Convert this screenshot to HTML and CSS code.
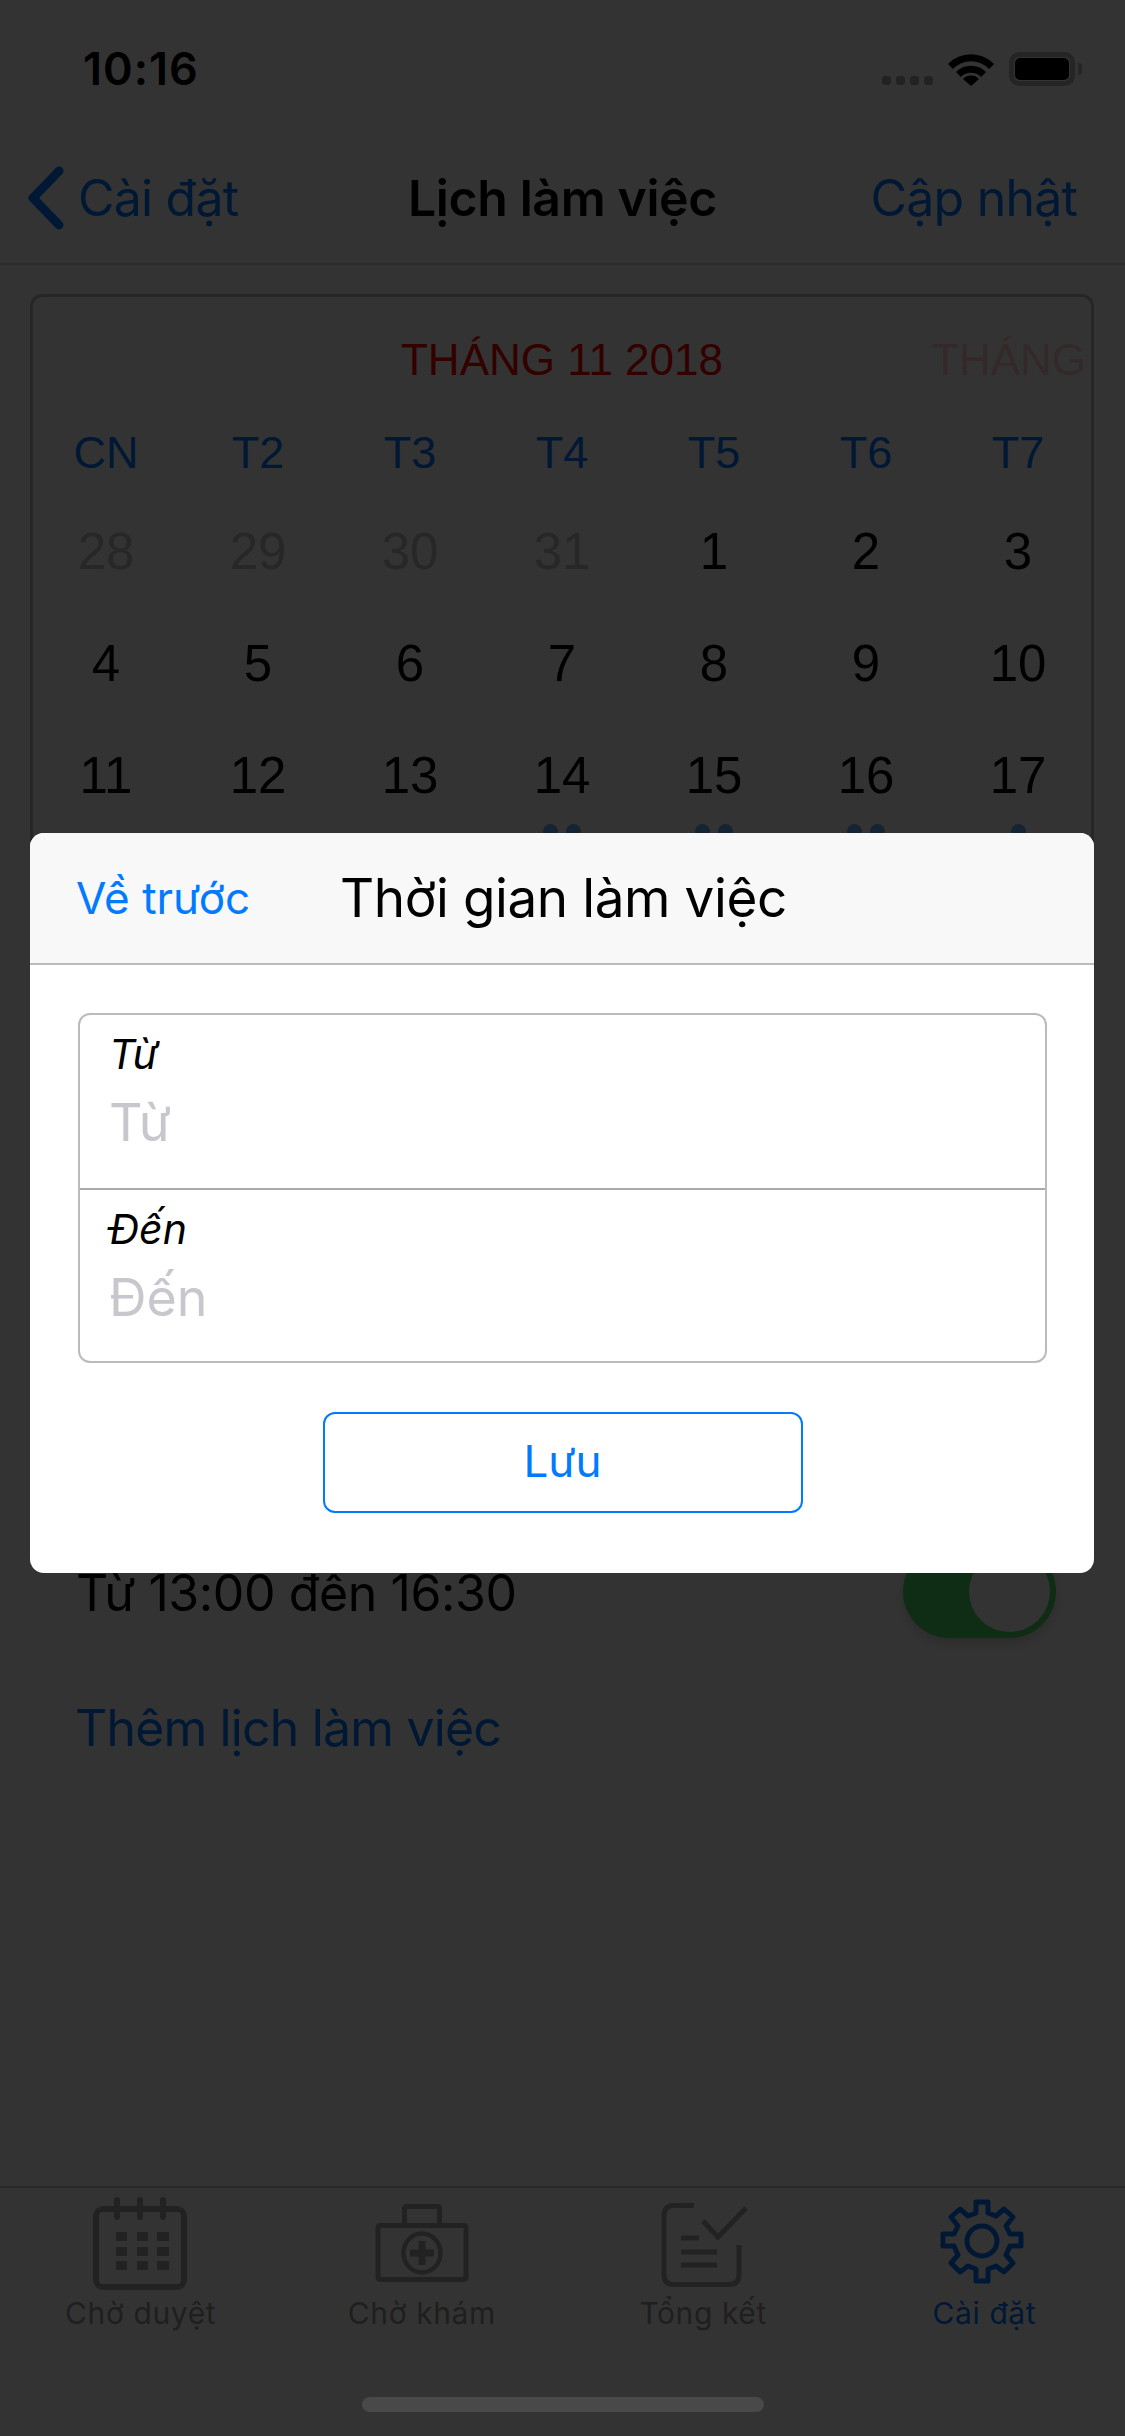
FILE: index.html
```html
<!DOCTYPE html>
<html lang="vi">
<head>
    <meta charset="UTF-8">
    <meta name="viewport" content="width=device-width, initial-scale=1.0">
    <title>Lịch làm việc</title>
    <link rel="stylesheet" href="styles.css">
</head>
<body>
    <div class="screen">
        <div class="statusBar">
            <span class="time">10:16</span>
            <div class="statusIcons">
                <div class="signal"><i></i><i></i><i></i><i></i></div>
                <svg class="wifi" width="46" height="34" viewBox="0 0 46 34">
                    <path d="M0 12 A32 32 0 0 1 46 12 L41 17 A25 25 0 0 0 5 17 Z" fill="#000"/>
                    <path d="M8 20 A21 21 0 0 1 38 20 L33 25 A14 14 0 0 0 13 25 Z" fill="#000"/>
                    <path d="M15 27 A11 11 0 0 1 31 27 L23 34 Z" fill="#000"/>
                </svg>
                <div class="battery"><div class="batteryFill"></div></div>
                <div class="batteryNub"></div>
            </div>
        </div>

        <div class="navBar">
            <div class="navBack">
                <svg width="37" height="64" viewBox="0 0 37 64">
                    <path d="M32 5 L6 32 L32 59" fill="none" stroke="#007aff" stroke-width="9" stroke-linecap="round" stroke-linejoin="round"/>
                </svg>
                <span>Cài đặt</span>
            </div>
            <div class="navTitle">Lịch làm việc</div>
            <div class="navAction">Cập nhật</div>
        </div>

        <div class="calendar">
            <div class="monthRow">
                <span class="monthTitle">THÁNG 11 2018</span>
                <span class="monthNext">THÁNG</span>
            </div>
            <div class="weekdays">
                <span>CN</span><span>T2</span><span>T3</span><span>T4</span><span>T5</span><span>T6</span><span>T7</span>
            </div>
            <div class="dates">
                <div class="date muted">28</div>
                <div class="date muted">29</div>
                <div class="date muted">30</div>
                <div class="date muted">31</div>
                <div class="date">1</div>
                <div class="date">2</div>
                <div class="date">3</div>
                <div class="date">4</div>
                <div class="date">5</div>
                <div class="date">6</div>
                <div class="date">7</div>
                <div class="date">8</div>
                <div class="date">9</div>
                <div class="date">10</div>
                <div class="date">11</div>
                <div class="date">12</div>
                <div class="date">13</div>
                <div class="date">14<div class="dots"><i></i><i></i></div></div>
                <div class="date">15<div class="dots"><i></i><i></i></div></div>
                <div class="date">16<div class="dots"><i></i><i></i></div></div>
                <div class="date">17<div class="dots"><i></i></div></div>
            </div>
        </div>

        <div class="scheduleRow">
            <span>Từ 13:00 đến 16:30</span>
            <div class="toggle"><div class="knob"></div></div>
        </div>
        <div class="addRow">Thêm lịch làm việc</div>

        <div class="tabBar">
            <div class="tab">
                <svg width="94" height="94" viewBox="1 0 94 94">
                    <rect x="3" y="13" width="88" height="78" rx="7" fill="none" stroke="#a8a8a8" stroke-width="6"/>
                    <path d="M24 4 V21 M47 4 V21 M70 4 V21" stroke="#a8a8a8" stroke-width="6" stroke-linecap="round"/>
                    <path d="M23 36 h11 v9 h-11z M44 36 h11 v9 h-11z M64 36 h12 v9 h-12z M23 51 h11 v9 h-11z M44 51 h11 v9 h-11z M64 51 h12 v9 h-12z M23 65 h11 v9 h-11z M44 65 h11 v9 h-11z M64 65 h12 v9 h-12z" fill="#a8a8a8"/>
                </svg>
                <span>Chờ duyệt</span>
            </div>
            <div class="tab">
                <svg width="94" height="94" viewBox="0 0 94 94">
                    <path d="M29.5 28 V12.5 Q29.5 10.5 31.5 10.5 H62.5 Q64.5 10.5 64.5 12.5 V28" fill="none" stroke="#a8a8a8" stroke-width="5"/>
                    <rect x="3" y="29.5" width="88" height="54" rx="2" fill="none" stroke="#a8a8a8" stroke-width="5"/>
                    <ellipse cx="47" cy="57" rx="18.5" ry="19.5" fill="none" stroke="#a8a8a8" stroke-width="4.5"/>
                    <path d="M47 45 V69 M35 57 H59" stroke="#a8a8a8" stroke-width="7"/>
                </svg>
                <span>Chờ khám</span>
            </div>
            <div class="tab">
                <svg width="94" height="94" viewBox="0 0 94 94">
                    <path d="M38 9.5 H18 Q8 9.5 8 19.5 V78.5 Q8 88.5 18 88.5 H73 Q83 88.5 83 78.5 V49" fill="none" stroke="#a8a8a8" stroke-width="5"/>
                    <path d="M47 25 L62 41 L90 12" fill="none" stroke="#a8a8a8" stroke-width="5"/>
                    <path d="M25 42 H43 M25 56 H61 M25 69 H61" stroke="#a8a8a8" stroke-width="5"/>
                </svg>
                <span>Tổng kết</span>
            </div>
            <div class="tab active">
                <svg width="94" height="94" viewBox="2 0 94 94">
                    <g fill="none" stroke="#007aff" stroke-width="5" stroke-linejoin="round">
                        <path d="M41 6 H53 V17 L61 20 L69 13 L78 21 L71 30 L75 38 H86 V50 H75 L71 59 L78 67 L69 76 L61 70 L53 73 V85 H41 V73 L33 70 L25 76 L16 67 L23 59 L19 50 H8 V38 H19 L23 30 L16 21 L25 13 L33 20 L41 17 Z"/>
                        <ellipse cx="47" cy="45" rx="15" ry="15"/>
                    </g>
                </svg>
                <span>Cài đặt</span>
            </div>
        </div>
    </div>

    <div class="overlay">
        <div class="modal">
            <div class="modalHeader">
                <span class="modalBack">Về trước</span>
                <span class="modalTitle">Thời gian làm việc</span>
            </div>
            <div class="modalBody">
                <div class="fields">
                    <div class="field">
                        <div class="fieldLabel">Từ</div>
                        <div class="fieldInput">Từ</div>
                    </div>
                    <div class="field">
                        <div class="fieldLabel">Đến</div>
                        <div class="fieldInput">Đến</div>
                    </div>
                </div>
                <div class="saveButton">Lưu</div>
            </div>
        </div>
    </div>
    <div class="homeIndicator"></div>
</body>
</html>
```
FILE: styles.css
```css
* {
    box-sizing: border-box;
}
html, body {
    margin: 0;
    height: 2436px;
    overflow: hidden;
}
body {
    font-family: "Inter", "Liberation Sans", sans-serif;
    background-color: #fff;
    color: #000;
    position: relative;
}
.screen {
    height: 2436px;
    display: flex;
    flex-direction: column;
}

/* status bar */
.statusBar {
    height: 132px;
    padding: 45px 43px 0 83px;
    display: flex;
    justify-content: space-between;
    align-items: flex-start;
}
.time {
    font-size: 45px;
    line-height: 48px;
    font-weight: 600;
    letter-spacing: 1px;
}
.statusIcons {
    display: flex;
    align-items: flex-end;
    margin-top: 7px;
}
.signal {
    display: flex;
    gap: 5px;
    margin-right: 15px;
    margin-bottom: 1px;
}
.signal i {
    width: 9px;
    height: 9px;
    border-radius: 3px;
    background-color: #a8a8a8;
}
.wifi {
    display: block;
    margin-right: 15px;
}
.battery {
    width: 66px;
    height: 34px;
    border: 5px solid #b8b8b8;
    border-radius: 10px;
    padding: 1px;
}
.batteryFill {
    height: 100%;
    background-color: #000;
    border-radius: 5px;
}
.batteryNub {
    width: 4px;
    height: 12px;
    margin: 0 0 11px 3px;
    background-color: #b8b8b8;
    border-radius: 0 3px 3px 0;
}

/* nav bar */
.navBar {
    height: 133px;
    padding: 0 48px 0 48px;
    display: flex;
    justify-content: space-between;
    align-items: center;
    border-bottom: 2px solid #d8d8d8;
    font-size: 50px;
    letter-spacing: -0.8px;
    color: #007aff;
}
.navBack {
    display: flex;
    align-items: center;
    gap: 14px;
    width: 300px;
    margin-left: -21px;
}
.navBack svg {
    display: block;
}
.navTitle {
    font-weight: 600;
    letter-spacing: -0.4px;
    color: #000;
}
.navAction {
    width: 279px;
    text-align: right;
}

/* calendar */
.calendar {
    margin: 29px 31px 0 30px;
    height: 1100px;
    border: 3px solid #bebebe;
    border-radius: 12px;
    overflow: hidden;
    flex-shrink: 0;
    font-family: "Liberation Sans", sans-serif;
}
.monthRow {
    height: 125px;
    position: relative;
    display: flex;
    justify-content: center;
    align-items: center;
    font-size: 44px;
    white-space: nowrap;
}
.monthTitle {
    color: #ff0000;
}
.monthNext {
    position: absolute;
    left: 899px;
    color: #ff0000;
    opacity: 0.2;
}
.weekdays, .dates {
    display: grid;
    grid-template-columns: repeat(7, 152px);
    margin-left: -3px;
    text-align: center;
}
.weekdays {
    height: 62px;
    align-items: center;
    font-size: 45px;
    color: #007aff;
}
.dates {
    grid-auto-rows: 112px;
    margin-top: 12px;
    font-size: 51px;
}
.date {
    position: relative;
    line-height: 112px;
}
.date.muted {
    color: #c0c0c0;
}
.dots {
    position: absolute;
    left: 0;
    right: 0;
    bottom: -7px;
    display: flex;
    justify-content: center;
    gap: 8px;
}
.dots i {
    width: 15px;
    height: 15px;
    border-radius: 50%;
    background-color: #64b4ff;
}

/* list under the calendar */
.scheduleRow {
    margin-top: 151px;
    padding: 0 69px 0 76px;
    height: 93px;
    display: flex;
    justify-content: space-between;
    align-items: center;
    font-size: 50px;
    letter-spacing: -0.4px;
    flex-shrink: 0;
}
.scheduleRow span {
    padding-top: 3px;
}
.toggle {
    width: 153px;
    height: 93px;
    padding: 6px;
    border-radius: 47px;
    background-color: #4cd964;
    display: flex;
    justify-content: flex-end;
    box-shadow: 0 6px 12px rgba(0, 0, 0, 0.15);
}
.knob {
    width: 81px;
    height: 81px;
    border-radius: 50%;
    background-color: #fff;
}
.addRow {
    margin-top: 60px;
    padding-left: 75px;
    font-size: 50px;
    line-height: 60px;
    letter-spacing: -0.85px;
    color: #007aff;
    flex-shrink: 0;
}

/* tab bar */
.tabBar {
    margin-top: auto;
    height: 250px;
    border-top: 2px solid #c0c0c0;
    display: grid;
    grid-template-columns: repeat(4, 1fr);
    flex-shrink: 0;
}
.tab {
    display: flex;
    flex-direction: column;
    align-items: center;
    padding-top: 8px;
    font-size: 30px;
    letter-spacing: 0.6px;
    color: #9a9a9a;
}
.tab svg {
    display: block;
    margin-bottom: 5px;
    overflow: visible;
}
.tab.active {
    color: #007aff;
}

/* dimmed layer and dialog */
.overlay {
    position: absolute;
    top: 0;
    left: 0;
    right: 0;
    bottom: 0;
    background-color: rgba(0, 0, 0, 0.8);
    padding-top: 833px;
}
.modal {
    margin: 0 31px 0 30px;
    height: 740px;
    background-color: #fff;
    border-radius: 14px;
    overflow: hidden;
}
.modalHeader {
    height: 132px;
    padding: 0 0 0 46px;
    display: flex;
    align-items: center;
    background-color: #f8f8f8;
    border-bottom: 2px solid #bcbcbc;
}
.modalBack {
    width: 264px;
    font-size: 44px;
    color: #007aff;
}
.modalTitle {
    font-size: 53px;
    letter-spacing: -0.4px;
}
.modalBody {
    padding: 48px 47px 0 48px;
    display: flex;
    flex-direction: column;
    align-items: center;
}
.fields {
    width: 100%;
    border: 2px solid #bbb;
    border-radius: 12px;
}
.field {
    height: 173px;
    padding: 12px 29px 0;
}
.field + .field {
    border-top: 2px solid #aaa;
}
.fieldLabel {
    font-size: 41px;
    line-height: 55px;
    font-style: italic;
}
.fieldInput {
    margin-top: 11px;
    font-size: 52px;
    line-height: 60px;
    color: #c7c7cd;
}
.saveButton {
    margin-top: 49px;
    width: 480px;
    height: 101px;
    padding-bottom: 3px;
    border: 2px solid #007aff;
    border-radius: 12px;
    display: flex;
    justify-content: center;
    align-items: center;
    font-size: 44px;
    color: #007aff;
}
.homeIndicator {
    position: absolute;
    left: 362px;
    bottom: 24px;
    width: 402px;
    height: 15px;
    border-radius: 8px;
    background-color: #494949;
}
```
